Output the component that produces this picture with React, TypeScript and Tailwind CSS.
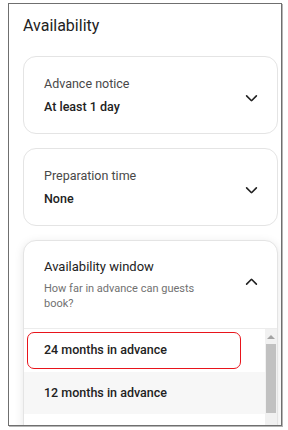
import React from 'react';

const Chevron = ({ up = false }: { up?: boolean }) => (
  <svg
    viewBox="0 0 32 32"
    className={up ? 'h-[13px] w-[13px] rotate-180' : 'h-[13px] w-[13px]'}
    fill="none"
    stroke="#222222"
    strokeWidth={4}
    strokeLinecap="round"
    strokeLinejoin="round"
  >
    <path d="M28 12 16.7 23.3a1 1 0 0 1-1.4 0L4 12" />
  </svg>
);

interface SettingCardProps {
  label: string;
  value: string;
}

const SettingCard: React.FC<SettingCardProps> = ({ label, value }) => (
  <div className="flex items-center justify-between rounded-[13px] border border-[#e4e4e4] bg-white pl-[20px] pr-[19px] pt-[17px] pb-[16px]">
    <div>
      <div className="text-[12.5px] leading-[20px] text-[#484848]">{label}</div>
      <div className="mt-[3px] text-[12.5px] font-medium leading-[20px] text-[#222222]">{value}</div>
    </div>
    <div className="mt-[4px]">
      <Chevron />
    </div>
  </div>
);

const options = ['24 months in advance', '12 months in advance'];

export default function App() {
  return (
    <div className="h-[430px] w-[288px] overflow-hidden bg-white pl-[8px] pt-[3px]" style={{ fontFamily: 'Roboto, "Liberation Sans", sans-serif' }}>
      <div className="h-[423px] w-[274px] overflow-hidden border border-[#6f6f6f] bg-white pl-[14px] pr-[3px] pt-[10px] shadow-[1px_1px_0_#b5b5b5]">
        <h2 className="text-[16px] font-normal leading-[24px] text-[#222222]">Availability</h2>

        <div className="mt-[18px] flex flex-col gap-[14px]">
          <SettingCard label="Advance notice" value="At least 1 day" />
          <SettingCard label="Preparation time" value="None" />

          <div className="overflow-hidden rounded-t-[13px] border border-[#e4e4e4] bg-white shadow-[0_2px_10px_rgba(0,0,0,0.10)]">
            <div className="flex items-start justify-between pl-[20px] pr-[19px] pt-[16px] pb-[17px]">
              <div>
                <div className="text-[13px] leading-[20px] text-[#222222]">Availability window</div>
                <div className="mt-[4px] w-[160px] text-[11px] leading-[15px] text-[#717171]">
                  How far in advance can guests book?
                </div>
              </div>
              <div className="mt-[19px]">
                <Chevron up />
              </div>
            </div>

            <div className="flex border-t border-[#ececec]">
              <div className="flex-1">
                {options.map((opt, i) => (
                  <div
                    key={opt}
                    className={
                      'relative flex items-center pl-[20px] text-[12.5px] font-medium text-[#222222] ' +
                      (i === 1 ? 'h-[42px] bg-[#f7f7f7]' : 'h-[43px] bg-white')
                    }
                  >
                    {opt}
                    {i === 0 && (
                      <div className="pointer-events-none absolute left-[3px] top-[3px] h-[37px] w-[214px] rounded-[7px] border-[1.5px] border-[#e8141b]" />
                    )}
                  </div>
                ))}
                <div className="h-[43px] bg-white" />
              </div>
              <div className="flex w-[12px] flex-col items-center bg-[#f1f1f1]">
                <div className="mt-[6px] h-0 w-0 border-x-[4px] border-b-[4px] border-x-transparent border-b-[#a3a3a3]" />
                <div className="mt-[5px] h-[69px] w-[10px] bg-[#c1c1c1]" />
              </div>
            </div>
          </div>
        </div>
      </div>
    </div>
  );
}
